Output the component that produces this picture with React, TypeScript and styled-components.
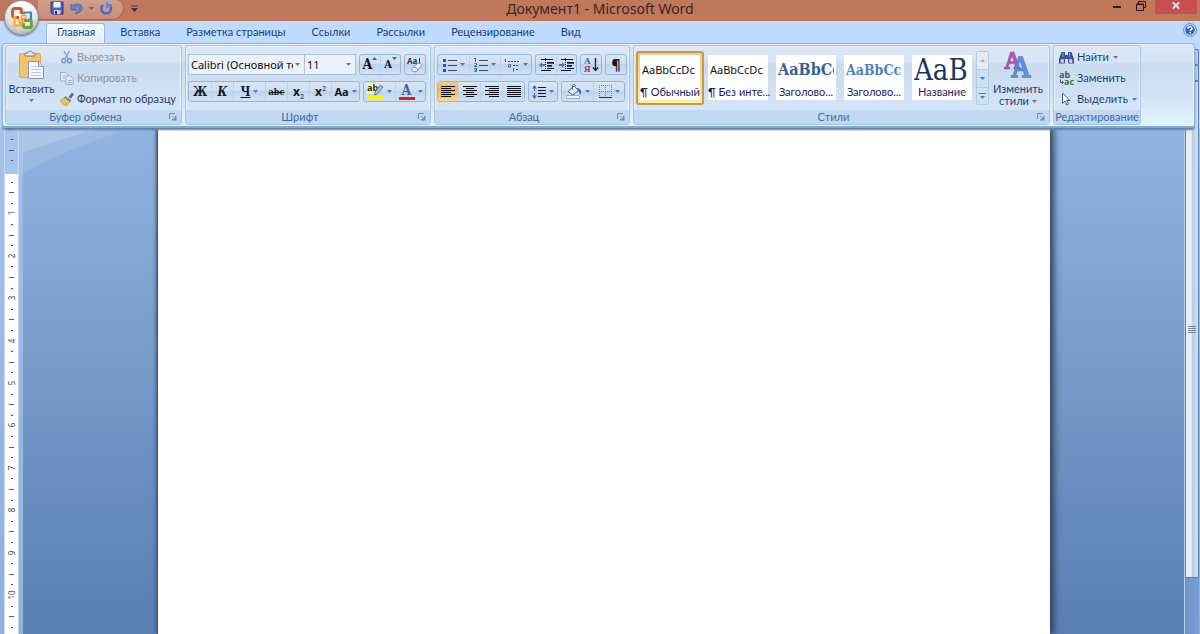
import React from "react";
import styled, { createGlobalStyle, css } from "styled-components";

const label = `Lato, "Open Sans", sans-serif`;
const ui = `"Noto Sans", "Open Sans", sans-serif`;
const serif = `"DejaVu Serif Condensed", "DejaVu Serif", "Liberation Serif", serif`;

const GlobalStyle = createGlobalStyle`
  *, *::before, *::after { box-sizing: border-box; }
  body { margin: 0; font-family: ${label}; font-size: 11px; line-height: 14px; color: #1c3f7c; background: #bfdbff; }
  button, select, textarea { font: inherit; color: inherit; margin: 0; padding: 0; border: 0; background: none; }
  svg { display: block; flex: none; }
`;

const AppWindow = styled.div`
  height: 100vh;
  display: flex;
  flex-direction: column;
  overflow: hidden;
  position: relative;
`;

/* ---------- title bar ---------- */
const TitleBar = styled.header`
  height: 21px;
  flex: none;
  display: grid;
  grid-template-columns: 1fr auto 1fr;
  background: #c0785d;
`;
const QuickAccess = styled.div`
  display: flex;
  align-items: flex-start;
  padding-left: 38px;
`;
const QuickPill = styled.div`
  display: flex;
  align-items: center;
  gap: 6px;
  height: 20px;
  padding: 0 10px 3px 12px;
  border: 1px solid #a5644d;
  border-width: 0 1px 1px 0;
  border-radius: 0 8px 12px 0;
  background: linear-gradient(#cf9f8d, #c88c75);
`;
const PlainButton = styled.button`
  display: flex;
  align-items: center;
  justify-content: center;
`;
const MoreButton = styled(PlainButton)`
  height: 16px;
  margin-left: 7px;
`;
const Title = styled.h1`
  margin: 0;
  font-family: ${ui};
  font-size: 14px;
  line-height: 18px;
  font-weight: 400;
  color: #40251d;
`;
const WindowButtons = styled.div`
  display: flex;
  justify-content: flex-end;
  padding-right: 3px;
`;
const WindowButton = styled(PlainButton)<{ $close?: boolean }>`
  width: ${(p) => (p.$close ? 42 : 24)}px;
  height: ${(p) => (p.$close ? 14 : 12)}px;
  padding-bottom: ${(p) => (p.$close ? 3 : 0)}px;
  background: ${(p) => (p.$close ? "#c84f50" : "none")};
  margin-left: ${(p) => (p.$close ? 2 : 0)}px;
`;

/* ---------- office button and tabs ---------- */
const OfficeButton = styled.button`
  position: absolute;
  left: 4px;
  top: 0;
  width: 35px;
  height: 35px;
  display: flex;
  align-items: center;
  justify-content: center;
  border-radius: 50%;
  border: 1px solid #8d8a94;
  background: radial-gradient(circle at 50% 25%, #ffffff 20%, #e3e2e6 55%, #b9bcc8 80%, #f3f5fa 100%);
  box-shadow: 0 1px 2px #6a6a7a;
`;
const TabBar = styled.nav`
  flex: none;
  height: 22px;
  padding: 2px 3px 0 46px;
  display: flex;
  align-items: stretch;
  background: #bfdbff;
`;
const Tab = styled.button<{ $active?: boolean }>`
  padding: 0 13px 3px 13px;
  ${(p) =>
    p.$active &&
    css`
      padding: 0 9px 3px 10px;
      margin-right: 2px;
      border: 1px solid #93b6e2;
      border-bottom: 0;
      border-radius: 3px 3px 0 0;
      background: linear-gradient(#f4f9ff, #dfeafa);
      box-shadow: inset 0 0 0 1px #f7fbff;
    `}
`;
const HelpButton = styled(PlainButton)`
  margin-left: auto;
  align-self: flex-start;
  height: 14px;
`;

/* ---------- ribbon ---------- */
const Ribbon = styled.section`
  flex: none;
  display: flex;
  gap: 3px;
  height: 85px;
  margin: 0 5px 0 2px;
  padding: 1px 2px;
  position: relative;
  z-index: 1;
  border: 1px solid #8fb4e0;
  border-bottom: 2px solid #7fadd2;
  border-radius: 4px;
  background: linear-gradient(#dbe7f6 0, #d3e2f3 20%, #c9dbef 24%, #d4e5f6 70%, #e3f5fd 100%);
  box-shadow: inset 0 0 0 1px #e6f4fd, 0 2px 2px #5f7fa8;
`;
const Group = styled.section<{ $width: number }>`
  flex: none;
  width: ${(p) => p.$width}px;
  display: flex;
  flex-direction: column;
  border: 1px solid #a9c4e2;
  border-radius: 3px;
  overflow: hidden;
  background: linear-gradient(#dce8f6 0, #d6e4f4 20%, #c9dbef 24%, #d8e8f8 100%);
  box-shadow: inset 0 0 0 1px #e6f0fa;
`;
const GroupBody = styled.div<{ $column?: boolean }>`
  flex: 1;
  min-height: 0;
  display: flex;
  flex-direction: ${(p) => (p.$column ? "column" : "row")};
`;
const GroupFoot = styled.footer`
  flex: none;
  height: 14px;
  display: flex;
  background: #c1d8f0;
  color: #3e6bab;
  align-items: center;
`;
const GroupName = styled.h2`
  flex: 1;
  margin: 0;
  font-size: 11px;
  line-height: 14px;
  font-weight: 400;
  text-align: center;
  white-space: nowrap;
`;
const Launcher = styled(PlainButton)`
  width: 16px;
`;
const BigButton = styled.button<{ $width: number }>`
  width: ${(p) => p.$width}px;
  display: flex;
  flex-direction: column;
  align-items: center;
  padding-top: 4px;
  white-space: nowrap;
  & > svg { margin-bottom: 3px; }
`;
const BigLabel = styled.span`
  line-height: 12px;
  min-height: 10px;
  display: flex;
  align-items: center;
  gap: 3px;
`;
const CommandList = styled.div<{ $gap: number }>`
  display: flex;
  flex-direction: column;
  gap: 5px;
  padding: 3px 0 0 ${(p) => p.$gap}px;
`;
const Command = styled.button`
  display: flex;
  flex: none;
  align-items: center;
  gap: 3px;
  height: 16px;
  white-space: nowrap;
  & > svg + svg, & > span + svg { margin-left: 1px; }
  &:disabled { color: #8d95a3; }
`;
const ControlRow = styled.div`
  display: flex;
  gap: 3px;
  padding: 8px 0 0 2px;
  & + & { padding-top: 6px; }
`;
const Combo = styled.label<{ $width: number }>`
  position: relative;
  width: ${(p) => p.$width}px;
  height: 21px;
  display: flex;
  font-family: ${ui};
  border: 1px solid #abc1de;
  background: #eaf2fb;
  & + & { margin-left: -4px; }
  & > select {
    width: 100%;
    appearance: none;
    padding: 0 11px 0 2px;
    color: #111;
    outline: 0;
  }
  & > svg { position: absolute; right: 4px; top: 8px; pointer-events: none; }
`;
const ButtonSet = styled.div`
  display: flex;
  height: 21px;
  border: 1px solid #98b5d9;
  border-radius: 3px;
  overflow: hidden;
  background: linear-gradient(#d8e6f6 0, #cfdff2 45%, #bfd3ec 50%, #cfe1f5 100%);
`;
const Tool = styled.button<{ $width?: number; $on?: boolean }>`
  width: ${(p) => p.$width ?? 22}px;
  display: flex;
  align-items: center;
  justify-content: center;
  gap: 3px;
  color: #14181f;
  & + & { border-left: 1px solid #bcd0ea; }
  ${(p) => p.$on && css`background: linear-gradient(#f9c88c, #fbb254 45%, #fdd88a);`}
`;
const Glyph = styled.span<{ $size: number; $italic?: boolean; $line?: string; $sans?: boolean }>`
  font-family: ${(p) => (p.$sans ? ui : serif)};
  font-size: ${(p) => p.$size}px;
  font-weight: 700;
  font-style: ${(p) => (p.$italic ? "italic" : "normal")};
  text-decoration: ${(p) => p.$line ?? "none"};
  line-height: 14px;
  & > sub, & > sup { font-size: 7px; line-height: 0; color: #3b66b0; }
`;
const SizeGlyph = styled.span<{ $size: number }>`
  display: flex;
  align-items: flex-start;
  font: 700 ${(p) => p.$size}px/15px ${serif};
`;
const ColorGlyph = styled.span<{ $bar: string }>`
  display: flex;
  justify-content: center;
  width: 16px;
  height: 16px;
  border-bottom: 3px solid ${(p) => p.$bar};
  font: 700 14px/13px ${serif};
  color: #3c5f9f;
`;

/* ---------- style gallery ---------- */
const Gallery = styled.div`
  display: flex;
  flex: none;
  align-items: flex-start;
  margin: 5px 0 0 2px;
`;
const StyleCard = styled.button<{ $on?: boolean }>`
  width: 68px;
  height: 54px;
  padding: 2px 2px 3px;
  display: flex;
  border: 2px solid transparent;
  border-radius: 3px;
  ${(p) =>
    p.$on &&
    css`
      border-color: #c29b4e;
      background: linear-gradient(#f5c68b, #fadc97 60%, #fff0a8);
    `}
`;
const StyleFace = styled.span`
  flex: 1;
  min-width: 0;
  height: 100%;
  display: flex;
  flex-direction: column;
  background: #fff;
`;
const Sample = styled.span<{ $size: number; $color: string; $serif?: boolean; $bold?: boolean }>`
  height: 30px;
  margin: 0 2px;
  overflow: hidden;
  white-space: nowrap;
  text-align: left;
  font-family: ${(p) => (p.$serif ? serif : ui)};
  font-size: ${(p) => p.$size}px;
  font-weight: ${(p) => (p.$bold ? 700 : 400)};
  line-height: 30px;
  color: ${(p) => p.$color};
`;
const StyleName = styled.span`
  line-height: 14px;
  color: #1a1a5c;
  white-space: nowrap;
  text-align: center;
`;
const GalleryScroll = styled.div`
  width: 13px;
  height: 54px;
  display: grid;
  grid-template-rows: 1fr 1fr 1fr;
  border: 1px solid #b4cbe8;
  border-radius: 2px;
  background: #cfe0f5;
  & > button + button { border-top: 1px solid #b4cbe8; }
  & > button:disabled { background: #e6e9ef; }
`;

/* ---------- workspace ---------- */
const Workspace = styled.main`
  flex: 1;
  min-height: 0;
  display: flex;
  background: linear-gradient(#a5c3ea, #8db0df);
`;
const Ruler = styled.div`
  flex: none;
  width: 13px;
  margin: 0 4px 0 5px;
  overflow: hidden;
  background: linear-gradient(#a9c4ec 0 46px, #fff 46px);
  box-shadow: -1px 0 #c5d8f0, 1px 0 #c5d8f0;
`;
const Canvas = styled.div`
  flex: 1;
  position: relative;
  display: flex;
  justify-content: center;
  overflow: hidden;
  box-shadow: inset 1px 0 #9bbbe6;
  background: linear-gradient(#93b4e1, #7a9ccb 45%, #668bbf 75%, #5a80b3);
`;
const Swoosh = styled.svg`
  position: absolute;
  left: 0;
  top: 0;
`;
const Page = styled.textarea`
  position: relative;
  flex: 0 1 893px;
  min-width: 0;
  padding: 56px 112px;
  resize: none;
  outline: 0;
  background: #fff;
  color: #000;
  border-left: 1px solid #45566f;
  box-shadow: 3px 0 7px 1px #33425a, -1px 0 2px #56709a;
`;
/* The scroll column starts beside the ribbon, whose edge lies over it. */
const ScrollTrack = styled.div`
  flex: none;
  width: 15px;
  margin: -79px 1px 0 0;
  display: flex;
  flex-direction: column;
  border-left: 1px solid #b5cdee;
  background: linear-gradient(90deg, #6f92c4, #7c9fd0);
`;
const ScrollButton = styled.button`
  flex: none;
  height: 16px;
  border: 1px solid #5d7fae;
  border-radius: 2px;
  background: #b9cbe4;
`;
const ScrollThumb = styled.div`
  height: 85%;
  display: flex;
  align-items: center;
  justify-content: center;
  border: 1px solid #5d7fae;
  background: linear-gradient(90deg, #e9edf4 0 45%, #b8cbe1 50%, #d3e0ef);
`;

/* ---------- drawings ---------- */
const Chevron = ({ color = "#5378b3" }: { color?: string }) => (
  <svg width="5" height="3" viewBox="0 0 5 3"><path d="M0 0h5L2.5 3z" fill={color} /></svg>
);
const SizeMark = ({ up }: { up?: boolean }) => (
  <svg width="5" height="3" viewBox="0 0 5 3"><path d={up ? "M0 3h5L2.5 0z" : "M0 0h5L2.5 3z"} fill="#3d62a4" /></svg>
);
const MoreArrow = () => (
  <svg width="7" height="7" viewBox="0 0 7 7"><path d="M0 1h7" stroke="#4f3440" /><path d="M0 3h7L3.500 7z" fill="#39304a" /></svg>
);
const OfficeLogo = () => (
  <svg width="24" height="24" viewBox="0 0 24 24" fill="none" strokeWidth="2.800">
    <path d="M9 11.500H4.500a2 2 0 0 1-2-2v-5a2 2 0 0 1 2-2h5a2 2 0 0 1 2 2V8" stroke="#d9501f" />
    <path d="M14 8.500V6.500h7v7h-3" stroke="#3f84cb" strokeWidth="2.200" />
    <path d="M6.500 11H4.500v8.500h7V15" stroke="#f0b323" strokeWidth="2.400" />
    <path d="M14 14.500h6a1.500 1.500 0 0 1 1.500 1.500v4a1.500 1.500 0 0 1-1.500 1.500h-5a1.500 1.500 0 0 1-1.500-1.500v-3" stroke="#6aa43b" />
    <path d="M11.500 9.500h4.500v3h-4.500zM9 14h4v3H9z" stroke="#eda33b" strokeWidth="1.400" />
  </svg>
);
const SaveIcon = () => (
  <svg width="14" height="14" viewBox="0 0 14 14">
    <path d="M1 1h12v12H2.500L1 11.500z" fill="#5560bd" stroke="#2c3384" />
    <path d="M3.500 1h7v5.500h-7z" fill="#eef3fd" /><path d="M4 9h6.500v4H4z" fill="#c6d0ee" /><path d="M5 10h2v3H5z" fill="#2c3384" />
  </svg>
);
const UndoIcon = () => (
  <svg width="13" height="13" viewBox="0 0 13 13">
    <path d="M1 2v6h6L4.700 5.800C7 4 9 4.600 9 6.600 9 8.800 7.500 10 5.500 11.500 9.500 11 12 9 12 6 12 2 7 .5 3 3.800z" fill="#5b86dc" stroke="#3558ac" strokeWidth=".7" />
  </svg>
);
const RedoIcon = () => (
  <svg width="13" height="13" viewBox="0 0 13 13">
    <path d="M3 3A4.800 4.800 0 1 0 10.500 4.500" fill="none" stroke="#3f69c6" strokeWidth="2.400" />
    <path d="M6 0v6.500h1.500L8.500 4.500l3.500-.5V2H8.500L7.500 0z" fill="#5b86dc" />
  </svg>
);
const MinimizeIcon = () => <svg width="8" height="8" viewBox="0 0 8 8"><path d="M0 5h8" stroke="#2b1a15" strokeWidth="2" /></svg>;
const RestoreIcon = () => (
  <svg width="10" height="10" viewBox="0 0 10 10" fill="none" stroke="#2b1a15">
    <path d="M2.500 3V.5h7v6H8" /><path d="M.5 3h7v6.500h-7z" /><path d="M.5 3.500h7" />
  </svg>
);
const CloseIcon = () => <svg width="8" height="7" viewBox="0 0 8 7"><path d="M.8.500 7.200 6.500M7.200.500.8 6.500" stroke="#fff" strokeWidth="1.700" /></svg>;
const HelpIcon = () => (
  <svg width="14" height="14" viewBox="0 0 14 14">
    <circle cx="7" cy="7" r="6.300" fill="#eaf3ff" stroke="#4a78bd" /><circle cx="7" cy="7" r="4.800" fill="#2d65c4" />
    <path d="M5 5.500C5 3.300 9 3.300 9 5.400 9 6.700 7.200 6.700 7.200 8M7.200 9v1.500" fill="none" stroke="#fff" strokeWidth="1.500" />
  </svg>
);
const LauncherIcon = () => (
  <svg width="8" height="8" viewBox="0 0 8 8" fill="none" stroke="#6d8fbd"><path d="M.5 6V.5H6" /><path d="M3 3l3 3" /><path d="M7.500 3v4.500H3V6h3V3z" fill="#6d8fbd" stroke="none" /></svg>
);
const PasteIcon = () => (
  <svg width="28" height="30" viewBox="0 0 28 30">
    <rect x="1.500" y="3.500" width="21" height="24" rx="1.500" fill="#f1c469" stroke="#d9a852" />
    <path d="M7 6V3h2.500C10 .5 14 .5 14.500 3H17v3z" fill="#e8e9ed" stroke="#747a86" />
    <path d="M10.500 11.500h10l5 5v12h-15z" fill="#f8faff" stroke="#8393b3" />
    <path d="M20.500 11.500v5h5" fill="#dbe4f3" stroke="#8393b3" />
    <path d="M13 16.500h6M13 19.500h10M13 22.500h10M13 25.500h10" stroke="#b9c7de" />
  </svg>
);
const CutIcon = () => (
  <svg width="14" height="14" viewBox="0 0 14 14" fill="none" stroke="#8fa3c4" strokeWidth="1.500">
    <path d="M4 1l4.500 8M9.500 1 5 9" /><circle cx="3.800" cy="10.800" r="2" stroke="#7d97c4" /><circle cx="9.500" cy="10.800" r="2" stroke="#7d97c4" />
  </svg>
);
const CopyIcon = () => (
  <svg width="14" height="13" viewBox="0 0 14 13" fill="#e3eaf4" stroke="#9aadc9">
    <path d="M.5.500h5l2.500 2.500v6H.500z" /><path d="M6 4h4.500L13 6.500v6H6z" /><path d="M8 8.500h3.500M8 10.500h3.500M2.500 4h2.500M2.500 6h2.500" />
  </svg>
);
const BrushIcon = () => (
  <svg width="14" height="14" viewBox="0 0 14 14">
    <path d="M9 5 12 1l1.500 1.200L10.800 6.200z" fill="#5a6aa4" stroke="#3c4a80" strokeWidth=".6" />
    <path d="M5.500 4.500 11 8.500 9.700 9.800 4.500 6z" fill="#8390c0" stroke="#4a5588" strokeWidth=".6" />
    <path d="M4.500 5.800 9.700 9.800 6.500 13.500C4 13 1.500 11 .5 8.500z" fill="#f2d264" stroke="#a8862c" strokeWidth=".8" />
    <path d="M3.500 8 7 12M2 8.500 5.500 12" stroke="#a8862c" strokeWidth=".4" />
  </svg>
);
const EraserIcon = () => (
  <svg width="17" height="16" viewBox="0 0 17 16">
    <text x="0" y="7" fontFamily="Noto Sans" fontSize="8" fontWeight="700" fill="#333a48">Aa</text>
    <path d="M12.500 1v6" stroke="#333a48" />
    <path d="M4.500 12 10.500 6.500C12 5.500 15.500 7.500 14.500 9L9.500 14.500C8 15.500 4.500 14 4.500 12z" fill="#eef3fb" stroke="#6f87b3" />
    <path d="M6.500 10.200C8 10 10.500 11.500 10.800 13" fill="none" stroke="#6f87b3" />
  </svg>
);
const HighlightIcon = () => (
  <svg width="17" height="17" viewBox="0 0 17 17">
    <path d="M0 1h10v10H0z" fill="#fbf68a" /><path d="M0 12.500h16V16H0z" fill="#f8f400" />
    <text x="0" y="8" fontFamily="Noto Sans" fontSize="9" fontWeight="700" fill="#2a2f3a">ab</text>
    <path d="M13.500 2 16 4 10.500 11l-3 1 .5-3z" fill="#a9bee2" stroke="#4d6596" strokeWidth=".8" />
  </svg>
);
type ListKind = "dots" | "numbers" | "levels";
const ListIcon = ({ kind }: { kind: ListKind }) => (
  <svg width={kind === "levels" ? 16 : 14} height="14" viewBox={kind === "levels" ? "0 0 16 14" : "0 0 14 14"}>
    {kind === "levels" ? (
      <>
        <path d="M4 3.500h11M9 7.500h5M12 11.500h3" stroke="#3f4553" strokeDasharray="2 1" />
        <path d="M.5 1.500h1V4M4.500 6.500h2V9H4.500V7.500M9.500 10v3.500" fill="none" stroke="#3b62b4" />
      </>
    ) : (
      <>
        <path d="M5 2.500h9M5 7.500h9M5 12.500h9" stroke="#454b58" />
        {kind === "dots" ? (
          <path d="M0 1h3v3H0zM0 6h3v3H0zM0 11h3v3H0z" fill="#34549c" />
        ) : (
          <path d="M1.500 0v4M0 .5h2M.5 5.500H2.500V7L.5 8.500h2.500M.5 10.500H2.500v3H.5M.5 12h2" fill="none" stroke="#3b62b4" />
        )}
      </>
    )}
  </svg>
);
const IndentIcon = ({ right }: { right?: boolean }) => (
  <svg width="15" height="14" viewBox="0 0 15 14">
    <path d="M2 1.500h12M8 4.500h7M8 7.500h5M8 10.500h7M2 12.500h10" stroke="#14181f" />
    <path d="M8 5.500h7M8 8.500h5" stroke="#4d5462" />
    <path d="M6.500 0v14" stroke="#14181f" strokeDasharray="1 1" />
    <path d={right ? "M0 6h3V4l3 3-3 3V8H0z" : "M6 6H3V4L0 7l3 3V8h3z"} fill="#4773c7" />
  </svg>
);
const SortIcon = () => (
  <svg width="15" height="16" viewBox="0 0 15 16">
    <text x="0" y="7" fontFamily="Liberation Serif" fontSize="9" fontWeight="700" fill="#2f57a8">А</text>
    <text x="0" y="15" fontFamily="Liberation Serif" fontSize="9" fontWeight="700" fill="#a83246">Я</text>
    <path d="M11.500 1v12M9 10.500l2.500 3 2.500-3" fill="none" stroke="#23272f" strokeWidth="1.400" />
  </svg>
);
const AlignIcon = ({ lines }: { lines: number[][] }) => (
  <svg width="14" height="12" viewBox="0 0 14 12" stroke="#0c0f14">
    {lines.map(([a, b], i) => <path key={i} d={`M${a} ${i * 2 + 0.5}H${b}`} />)}
  </svg>
);
const SpacingIcon = () => (
  <svg width="14" height="14" viewBox="0 0 14 14">
    <path d="M6 2.500h8M6 5.500h8M6 8.500h8M6 11.500h8" stroke="#14181f" />
    <path d="M2.500 0 5 3.500H3V6H2V3.500H0zM2.500 14 5 10.500H3V8H2v2.500H0z" fill="#3d67ba" />
  </svg>
);
const FillIcon = () => (
  <svg width="16" height="15" viewBox="0 0 16 15">
    <path d="M.5 11.500h13v3H.5z" fill="#f6f8fb" stroke="#9badc8" />
    <path d="M2 7.500 8 2l4.500 4.500L7 11z" fill="#e8eef8" stroke="#4d6188" />
    <path d="M6.500 5.500V1.500C7 0 9 0 9.500 2" fill="none" stroke="#4d6188" />
    <path d="M11 4c3 0 4.500 2 4 7-1.500-1-2-3-3-4z" fill="#3d67ba" />
  </svg>
);
const BordersIcon = () => (
  <svg width="13" height="13" viewBox="0 0 13 13" fill="none">
    <path d="M.5 0v12M6.500 0v12M12.500 0v12M0 .5h13M0 6.500h13" stroke="#6a7fa6" strokeDasharray="1 1" /><path d="M0 12.500h13" stroke="#2c3442" />
  </svg>
);
const StylesIcon = () => (
  <svg width="30" height="30" viewBox="0 0 30 30">
    <path fillRule="evenodd" d="M7.500 2h3.500l5 15h1v2h-6v-2h1.500l-1-3.500H6.200L5 17h1.500v2h-5v-2H3zM9 5.500 6.900 11.500h4.200z" fill="#b556b5" stroke="#8d3c97" strokeWidth=".5" />
    <path fillRule="evenodd" d="M15.500 6.500h4l6.500 19h2v2h-9v-2h2.500l-1.200-4.500h-6L12.800 25.500H15v2H8v-2h2zM17 10.500l-2.500 8h5.200z" fill="#5f92dc" stroke="#3c6bb4" strokeWidth=".5" />
  </svg>
);
const FindIcon = () => (
  <svg width="15" height="13" viewBox="0 0 15 13">
    <path d="M2.500 1h3.500v3h3V1h3.500L15 8v4.500H9V8H6v4.500H0V8z" fill="#36539a" /><path d="M2 8.500h2.500v3H2zM10.500 8.500H13v3h-2.500zM4 2v4M10.500 2v4" fill="#cddcf5" stroke="#b4c8ec" strokeWidth=".7" />
  </svg>
);
const ReplaceIcon = () => (
  <svg width="15" height="15" viewBox="0 0 15 15" fontFamily="Noto Sans" fontSize="9" fontWeight="700">
    <text x="0" y="7" fill="#4d5566">ab</text><text x="5" y="14" fill="#2e7d3a">ac</text>
    <path d="M1.500 8.500v3H4M3 10l1.500 1.500L3 13" fill="none" stroke="#35548f" />
  </svg>
);
const SelectIcon = () => (
  <svg width="15" height="14" viewBox="0 0 15 14"><path d="M3.500 1v10.500L6 9l1.800 4 1.700-.8L7.700 8.500H11z" fill="#fff" stroke="#4a5c80" /></svg>
);

/* Vertical ruler: a number per centimetre, a tick per half, a dot per quarter. */
const RulerScale = () => (
  <svg width="13" height="1000" viewBox="0 0 13 1000">
    {Array.from({ length: 90 }, (_, i) => i - 4).map((k) => {
      const y = Math.round(43 + k * 10.6);
      if (k === 0) return null;
      if (k % 4 === 0)
        return (
          <text key={k} transform={`translate(10 ${y}) rotate(-90)`} textAnchor="middle" fontFamily="Noto Sans" fontSize="8" fill="#3b3f48">
            {Math.abs(k / 4)}
          </text>
        );
      return k % 2 === 0 ? <path key={k} d={`M4 ${y}.500h5`} stroke="#555a66" /> : <path key={k} d={`M6 ${y}h2v1H6z`} fill="#444955" />;
    })}
  </svg>
);

const GroupFooter = ({ name, launcher }: { name: string; launcher?: boolean }) => (
  <GroupFoot>
    <GroupName>{name}</GroupName>
    {launcher && <Launcher aria-label={`${name}: параметры`}><LauncherIcon /></Launcher>}
  </GroupFoot>
);

const tabs = ["Главная", "Вставка", "Разметка страницы", "Ссылки", "Рассылки", "Рецензирование", "Вид"];

const styleCards = [
  { name: "¶ Обычный", sample: "AaBbCcDc", size: 11, color: "#111", on: true },
  { name: "¶ Без инте...", sample: "AaBbCcDc", size: 11, color: "#111" },
  { name: "Заголово...", sample: "AaBbCc", size: 16, color: "#365f91", serif: true, bold: true },
  { name: "Заголово...", sample: "AaBbCc", size: 14, color: "#4f81bd", serif: true, bold: true },
  { name: "Название", sample: "AaB", size: 29, color: "#17365d", serif: true },
];

const full = [0, 14];
const aligns = [
  { name: "По левому краю", lines: [full, [0, 10], full, [0, 10], full, [0, 10]] },
  { name: "По центру", lines: [full, [3, 11], full, [3, 11], full, [3, 11]] },
  { name: "По правому краю", lines: [full, [4, 14], full, [4, 14], full, [4, 14]] },
  { name: "По ширине", lines: [full, full, full, full, full, full] },
];

export default function App() {
  return (
    <AppWindow>
      <GlobalStyle />
      <TitleBar>
        <QuickAccess>
          <QuickPill>
            <PlainButton aria-label="Сохранить"><SaveIcon /></PlainButton>
            <PlainButton aria-label="Отменить"><UndoIcon /></PlainButton>
            <PlainButton aria-label="Список отмен"><Chevron color="#6b5f74" /></PlainButton>
            <PlainButton aria-label="Повторить"><RedoIcon /></PlainButton>
          </QuickPill>
          <MoreButton aria-label="Настройка панели"><MoreArrow /></MoreButton>
        </QuickAccess>
        <Title>Документ1 - Microsoft Word</Title>
        <WindowButtons>
          <WindowButton aria-label="Свернуть"><MinimizeIcon /></WindowButton>
          <WindowButton aria-label="Восстановить"><RestoreIcon /></WindowButton>
          <WindowButton $close aria-label="Закрыть"><CloseIcon /></WindowButton>
        </WindowButtons>
      </TitleBar>
      <TabBar>
        {tabs.map((t, i) => <Tab key={t} $active={i === 0}>{t}</Tab>)}
        <HelpButton aria-label="Справка"><HelpIcon /></HelpButton>
      </TabBar>
      <OfficeButton aria-label="Кнопка Office"><OfficeLogo /></OfficeButton>

      <Ribbon>
        <Group $width={177}>
          <GroupBody>
            <BigButton $width={51}>
              <PasteIcon />
              <BigLabel>Вставить</BigLabel>
              <BigLabel><Chevron /></BigLabel>
            </BigButton>
            <CommandList $gap={3}>
              <Command disabled><CutIcon /><span>Вырезать</span></Command>
              <Command disabled><CopyIcon /><span>Копировать</span></Command>
              <Command><BrushIcon /><span>Формат по образцу</span></Command>
            </CommandList>
          </GroupBody>
          <GroupFooter name="Буфер обмена" launcher />
        </Group>

        <Group $width={246}>
          <GroupBody $column>
            <ControlRow>
              <Combo $width={117}>
                <select aria-label="Шрифт"><option>Calibri (Основной текст)</option></select>
                <Chevron />
              </Combo>
              <Combo $width={52}>
                <select aria-label="Размер шрифта"><option>11</option></select>
                <Chevron />
              </Combo>
              <ButtonSet>
                <Tool $width={20} aria-label="Увеличить размер"><SizeGlyph $size={14}>A<SizeMark up /></SizeGlyph></Tool>
                <Tool $width={20} aria-label="Уменьшить размер"><SizeGlyph $size={11}>A<SizeMark /></SizeGlyph></Tool>
              </ButtonSet>
              <ButtonSet><Tool $width={20} aria-label="Очистить формат"><EraserIcon /></Tool></ButtonSet>
            </ControlRow>
            <ControlRow>
              <ButtonSet>
                <Tool aria-label="Полужирный"><Glyph $size={12}>Ж</Glyph></Tool>
                <Tool aria-label="Курсив"><Glyph $size={12} $italic>К</Glyph></Tool>
                <Tool $width={32} aria-label="Подчеркнутый"><Glyph $size={12} $line="underline">Ч</Glyph><Chevron /></Tool>
                <Tool aria-label="Зачеркнутый"><Glyph $size={9} $line="line-through">abc</Glyph></Tool>
                <Tool aria-label="Подстрочный"><Glyph $size={12} $sans>x<sub>2</sub></Glyph></Tool>
                <Tool aria-label="Надстрочный"><Glyph $size={12} $sans>x<sup>2</sup></Glyph></Tool>
                <Tool $width={28} aria-label="Регистр"><Glyph $size={11} $sans>Aa</Glyph><Chevron /></Tool>
              </ButtonSet>
              <ButtonSet>
                <Tool $width={31} aria-label="Цвет выделения"><HighlightIcon /><Chevron /></Tool>
                <Tool $width={30} aria-label="Цвет текста"><ColorGlyph $bar="#e01b24">A</ColorGlyph><Chevron /></Tool>
              </ButtonSet>
            </ControlRow>
          </GroupBody>
          <GroupFooter name="Шрифт" launcher />
        </Group>

        <Group $width={196}>
          <GroupBody $column>
            <ControlRow>
              <ButtonSet>
                <Tool $width={31} aria-label="Маркеры"><ListIcon kind="dots" /><Chevron /></Tool>
                <Tool $width={31} aria-label="Нумерация"><ListIcon kind="numbers" /><Chevron /></Tool>
                <Tool $width={31} aria-label="Многоуровневый список"><ListIcon kind="levels" /><Chevron /></Tool>
              </ButtonSet>
              <ButtonSet>
                <Tool $width={20} aria-label="Уменьшить отступ"><IndentIcon /></Tool>
                <Tool $width={20} aria-label="Увеличить отступ"><IndentIcon right /></Tool>
              </ButtonSet>
              <ButtonSet><Tool $width={20} aria-label="Сортировка"><SortIcon /></Tool></ButtonSet>
              <ButtonSet><Tool $width={20} aria-label="Непечатаемые знаки"><Glyph $size={14} $sans>¶</Glyph></Tool></ButtonSet>
            </ControlRow>
            <ControlRow>
              <ButtonSet>
                {aligns.map((a, i) => (
                  <Tool key={a.name} $width={i === 0 ? 20 : 22} $on={i === 0} aria-label={a.name}><AlignIcon lines={a.lines} /></Tool>
                ))}
              </ButtonSet>
              <ButtonSet><Tool $width={28} aria-label="Интервал"><SpacingIcon /><Chevron /></Tool></ButtonSet>
              <ButtonSet>
                <Tool $width={31} aria-label="Заливка"><FillIcon /><Chevron /></Tool>
                <Tool $width={31} aria-label="Границы"><BordersIcon /><Chevron /></Tool>
              </ButtonSet>
            </ControlRow>
          </GroupBody>
          <GroupFooter name="Абзац" launcher />
        </Group>

        <Group $width={417}>
          <GroupBody>
            <Gallery>
              {styleCards.map((s, i) => (
                <StyleCard key={i} $on={s.on}>
                  <StyleFace>
                    <Sample $size={s.size} $color={s.color} $serif={s.serif} $bold={s.bold}>{s.sample}</Sample>
                    <StyleName>{s.name}</StyleName>
                  </StyleFace>
                </StyleCard>
              ))}
              <GalleryScroll>
                <PlainButton disabled aria-label="Вверх"><svg width="5" height="3" viewBox="0 0 5 3"><path d="M0 3h5L2.500 0z" fill="#a9aebb" /></svg></PlainButton>
                <PlainButton aria-label="Вниз"><Chevron /></PlainButton>
                <PlainButton aria-label="Все стили"><svg width="7" height="6" viewBox="0 0 7 6"><path d="M0 .5h7" stroke="#5378b3" /><path d="M1 3h5L3.500 6z" fill="#5378b3" /></svg></PlainButton>
              </GalleryScroll>
            </Gallery>
            <BigButton $width={58}>
              <StylesIcon />
              <BigLabel>Изменить</BigLabel>
              <BigLabel>стили<Chevron /></BigLabel>
            </BigButton>
          </GroupBody>
          <GroupFooter name="Стили" launcher />
        </Group>

        <Group $width={88}>
          <GroupBody>
            <CommandList $gap={5}>
              <Command><FindIcon /><span>Найти</span><Chevron /></Command>
              <Command><ReplaceIcon /><span>Заменить</span></Command>
              <Command><SelectIcon /><span>Выделить</span><Chevron /></Command>
            </CommandList>
          </GroupBody>
          <GroupFooter name="Редактирование" />
        </Group>
      </Ribbon>

      <Workspace>
        <Ruler><RulerScale /></Ruler>
        <Canvas>
          <Swoosh width="136" height="48" viewBox="0 0 136 48">
            <path d="M0 0h80Q35 12 0 25z" fill="#fff" fillOpacity=".16" />
            <path d="M0 0h110Q50 18 0 46z" fill="#fff" fillOpacity=".1" />
          </Swoosh>
          <Page aria-label="Текст документа" />
        </Canvas>
        <ScrollTrack>
          <ScrollButton aria-label="Линейка" />
          <ScrollButton aria-label="Прокрутить вверх" />
          <ScrollThumb>
            <svg width="8" height="7" viewBox="0 0 8 7"><path d="M0 .5h8M0 2.500h8M0 4.500h8M0 6.500h8" stroke="#75879f" /></svg>
          </ScrollThumb>
        </ScrollTrack>
      </Workspace>
    </AppWindow>
  );
}
